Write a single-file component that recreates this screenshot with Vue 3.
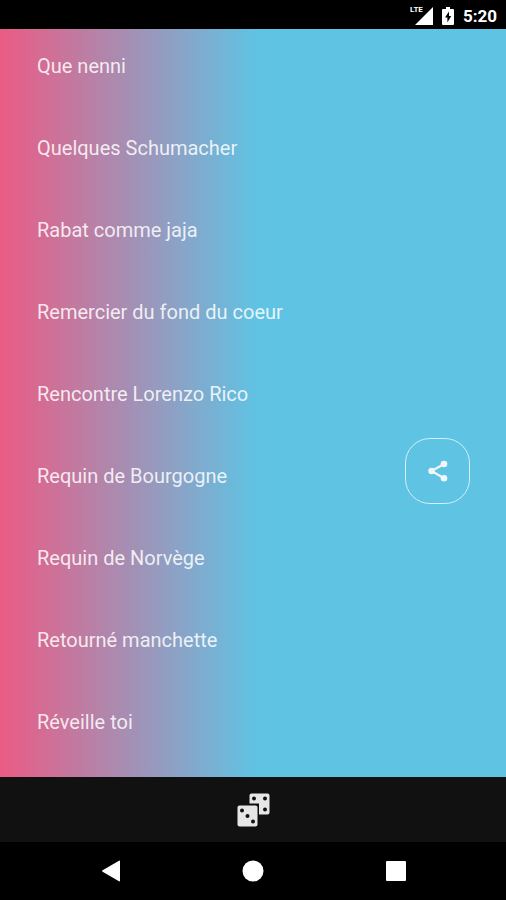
<script setup>
const sounds = [
  'Que nenni',
  'Quelques Schumacher',
  'Rabat comme jaja',
  'Remercier du fond du coeur',
  'Rencontre Lorenzo Rico',
  'Requin de Bourgogne',
  'Requin de Norvège',
  'Retourné manchette',
  'Réveille toi',
]
</script>

<template>
  <div class="screen">
    <header class="status">
      <div class="signal">
        <svg width="24" height="20" viewBox="0 0 24 20" aria-hidden="true">
          <path d="M24 1V19H6Z" fill="#fff" />
          <path d="M0 0H15V9H0Z" fill="#000" />
        </svg>
        <span class="lte">LTE</span>
      </div>
      <svg class="battery" width="12" height="18" viewBox="0 0 12 18" aria-hidden="true">
        <path d="M4 0H8V2H11Q12 2 12 3V17Q12 18 11 18H1Q0 18 0 17V3Q0 2 1 2H4Z" fill="#fff" />
        <path d="M7 4.5L3 10.5H5.4V15.5L9.2 9H7Z" fill="#000" />
      </svg>
      <span class="time">5:20</span>
    </header>

    <main class="content">
      <ul class="list">
        <li v-for="sound in sounds" :key="sound">
          <button class="sound" type="button">{{ sound }}</button>
        </li>
      </ul>
      <button class="share" type="button" aria-label="Partager">
        <svg width="24" height="24" viewBox="0 0 24 24" fill="#f0f6f9" aria-hidden="true">
          <path d="M18 5L5.6 12L18 19.2" fill="none" stroke="#f0f6f9" stroke-width="2.2" />
          <circle cx="5.6" cy="12" r="3.3" />
          <circle cx="18" cy="5" r="3.3" />
          <circle cx="18" cy="19.2" r="3.3" />
        </svg>
      </button>
    </main>

    <footer class="toolbar">
      <button class="plain" type="button" aria-label="Aléatoire">
        <svg width="34" height="34" viewBox="0 0 34 34" aria-hidden="true">
          <rect x="13.5" y="0.5" width="20" height="21" rx="2" fill="#e6e6e6" />
          <rect x="0" y="10.5" width="23" height="23" fill="#111" />
          <rect x="1.5" y="12.5" width="20" height="21" rx="2" fill="#e6e6e6" />
          <g fill="#111">
            <circle cx="18" cy="5.5" r="2" />
            <circle cx="29" cy="5.5" r="2" />
            <circle cx="29" cy="16.5" r="2" />
            <circle cx="6" cy="17.5" r="2" />
            <circle cx="11.5" cy="23" r="2" />
            <circle cx="17" cy="28.5" r="2" />
          </g>
        </svg>
      </button>
    </footer>

    <nav class="system">
      <button class="plain" type="button" aria-label="Retour">
        <svg width="22" height="22" viewBox="0 0 22 22" fill="#fff" aria-hidden="true">
          <path d="M19 .8Q20 .2 20 1.4V20.6Q20 21.8 19 21.2L2.6 11.8Q1.4 11 2.6 10.2Z" />
        </svg>
      </button>
      <button class="plain" type="button" aria-label="Accueil">
        <svg width="22" height="22" viewBox="0 0 22 22" fill="#fff" aria-hidden="true">
          <circle cx="11" cy="11" r="10.5" />
        </svg>
      </button>
      <button class="plain" type="button" aria-label="Applications récentes">
        <svg width="22" height="22" viewBox="0 0 22 22" fill="#fff" aria-hidden="true">
          <rect x="2" y="1" width="20" height="20" rx="1" />
        </svg>
      </button>
    </nav>
  </div>
</template>

<style>
body {
  background: #000;
}
</style>

<style scoped>
.screen {
  display: flex;
  flex-direction: column;
  min-height: 100vh;
  font-family: Roboto, "Liberation Sans", sans-serif;
  background: #000;
}

.status {
  display: flex;
  align-items: center;
  justify-content: flex-end;
  height: 29px;
  padding: 2px 9px 0 0;
  box-sizing: border-box;
  color: #fff;
}

.signal {
  position: relative;
  display: flex;
  margin-right: 9px;
}

.lte {
  position: absolute;
  top: 0;
  left: 1px;
  font-size: 8px;
  line-height: 8px;
  font-weight: 700;
}

.battery {
  margin-right: 9px;
}

.time {
  font-size: 17px;
  line-height: 24px;
  font-weight: 700;
}

.content {
  position: relative;
  flex: 1;
  background: linear-gradient(90deg, #eb5b84 0%, #5fc3e4 51%);
}

.list {
  display: flex;
  flex-direction: column;
  gap: 42px;
  margin: 0;
  padding: 17px 37px 32px;
  list-style: none;
}

.sound {
  display: block;
  width: 100%;
  height: 40px;
  padding: 0;
  border: 0;
  background: none;
  color: rgba(255, 255, 255, 0.85);
  font: inherit;
  font-size: 20px;
  line-height: 40px;
  text-align: left;
}

.share {
  position: absolute;
  right: 36px;
  bottom: 273px;
  display: flex;
  align-items: center;
  justify-content: center;
  width: 65px;
  height: 66px;
  padding: 0;
  border: 1px solid #d5eef8;
  border-radius: 25px;
  background: none;
}

.toolbar {
  display: flex;
  align-items: center;
  justify-content: center;
  height: 65px;
  background: #111;
}

.plain {
  display: flex;
  padding: 0;
  border: 0;
  background: none;
}

.system {
  display: flex;
  align-items: center;
  justify-content: space-between;
  height: 58px;
  padding: 0 100px;
}
</style>
